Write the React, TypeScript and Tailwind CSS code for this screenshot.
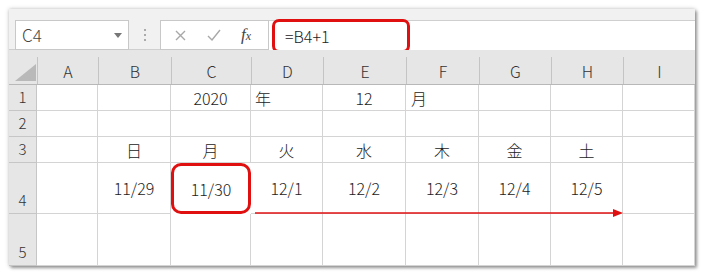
import React from "react"

const cols = ["A", "B", "C", "D", "E", "F", "G", "H", "I"]
const days = ["日", "月", "火", "水", "木", "金", "土"]
const dates = ["11/29", "11/30", "12/1", "12/2", "12/3", "12/4", "12/5"]

const font = { fontFamily: '"Noto Sans CJK JP", "Noto Sans", sans-serif' }

function Cell({ children, className = "" }: { children?: React.ReactNode; className?: string }) {
	return (
		<div className={`border-r border-b border-[#d4d4d4] flex items-center justify-center text-[16px] text-[#222] ${className}`}>
			{children}
		</div>
	)
}

function RowHead({ n, tall }: { n: number; tall?: boolean }) {
	return (
		<div
			className={`bg-[#e6e6e6] border-r border-b border-[#c6c6c6] flex justify-center text-[15px] text-[#333] ${
				tall ? "items-end pb-[2px]" : "items-center"
			}`}
		>
			{n}
		</div>
	)
}

export default function App() {
	return (
		<div className="w-[704px] h-[277px] bg-white pl-[9px] pt-[9px] font-light" style={font}>
			<div className="w-[686px] h-[257px] bg-white flex flex-col overflow-hidden shadow-[0_0_4px_rgba(0,0,0,0.25),2px_2px_3px_rgba(0,0,0,0.35)]">
				{/* formula bar */}
				<div className="h-[41px] bg-[#f1f1f1] flex items-start pt-[11px] border-b border-[#cfcfcf] shrink-0">
					<div className="ml-[6px] w-[114px] h-[30px] bg-white border border-[#c8c8c8] flex items-center justify-between pl-[6px] pr-[6px]">
						<span className="text-[17px] text-[#444]">C4</span>
						<svg width="8" height="5" viewBox="0 0 8 5">
							<polygon points="0,0 8,0 4,5" fill="#777" />
						</svg>
					</div>
					<div className="w-[31px] h-[30px] flex flex-col items-center justify-center gap-[3px]">
						<span className="w-[2px] h-[2px] bg-[#aaa]" />
						<span className="w-[2px] h-[2px] bg-[#aaa]" />
						<span className="w-[2px] h-[2px] bg-[#aaa]" />
					</div>
					<div className="w-[109px] h-[30px] bg-white border border-[#c8c8c8] flex items-center pl-[14px]">
						<svg width="11" height="11" viewBox="0 0 11 11">
							<path d="M1 1 L10 10 M10 1 L1 10" stroke="#a8a8a8" strokeWidth="1.4" />
						</svg>
						<svg width="14" height="12" viewBox="0 0 14 12" className="ml-[21px]">
							<path d="M1 7 L5 11 L13 1" stroke="#a8a8a8" strokeWidth="1.4" fill="none" />
						</svg>
						<span
							className="ml-[20px] italic text-[17px] text-[#444] font-normal"
							style={{ fontFamily: '"Liberation Serif", serif' }}
						>
							f<span className="text-[12px]">x</span>
						</span>
					</div>
					<div className="flex-1 h-[30px] bg-white border-t border-[#cfcfcf] pl-[3px]">
						<div className="w-[138px] h-[34px] -mt-[2px] border-[3px] border-[#e01010] rounded-[7px] flex items-center pl-[10px] text-[16px] text-[#222]">
							=B4+1
						</div>
					</div>
				</div>

				{/* grid */}
				<div className="relative grid grid-cols-[28px_61px_73px_80px_72px_83px_73px_72px_72px_72px] grid-rows-[35px_26px_26px_26px_51px_52px]">
					{/* header row */}
					<div className="bg-[#e6e6e6] border-b border-[#b8b8b8] flex items-end justify-end pr-[1px] pb-[3px]">
						<svg width="21" height="17" viewBox="0 0 21 17">
							<polygon points="21,0 21,17 0,17" fill="#b9b9b9" />
						</svg>
					</div>
					{cols.map((c) => (
						<div key={c} className="bg-[#e6e6e6] border-b border-[#b8b8b8] pt-[7px]">
							<div className="h-full border-l border-[#c4c4c4] flex items-center justify-center text-[16px] text-[#333]">
								{c}
							</div>
						</div>
					))}

					{/* row 1 */}
					<RowHead n={1} />
					<Cell />
					<Cell />
					<Cell>2020</Cell>
					<Cell className="!justify-start pl-[4px]">年</Cell>
					<Cell>12</Cell>
					<Cell className="!justify-start pl-[5px]">月</Cell>
					<Cell />
					<Cell />
					<Cell />

					{/* row 2 */}
					<RowHead n={2} />
					{cols.map((c) => (
						<Cell key={c} />
					))}

					{/* row 3 */}
					<RowHead n={3} />
					<Cell />
					{days.map((d) => (
						<Cell key={d}>{d}</Cell>
					))}
					<Cell />

					{/* row 4 */}
					<RowHead n={4} tall />
					<Cell />
					{dates.map((d, i) =>
						i === 1 ? (
							<Cell key={d} className="!border-b-0 !border-r-0">
								<div className="w-full h-full border-[3px] border-[#e01010] rounded-[10px] flex items-center justify-center">
									{d}
								</div>
							</Cell>
						) : (
							<Cell key={d}>{d}</Cell>
						)
					)}
					<Cell />

					{/* row 5 */}
					<RowHead n={5} tall />
					{cols.map((c) => (
						<Cell key={c} />
					))}

					{/* arrow */}
					<svg className="absolute left-[246px] top-[158px]" width="370" height="10" viewBox="0 0 370 10">
						<line x1="0" y1="5" x2="360" y2="5" stroke="#e01010" strokeWidth="1.3" />
						<polygon points="358,1 368,5 358,9" fill="#e01010" />
					</svg>
				</div>
			</div>
		</div>
	)
}
